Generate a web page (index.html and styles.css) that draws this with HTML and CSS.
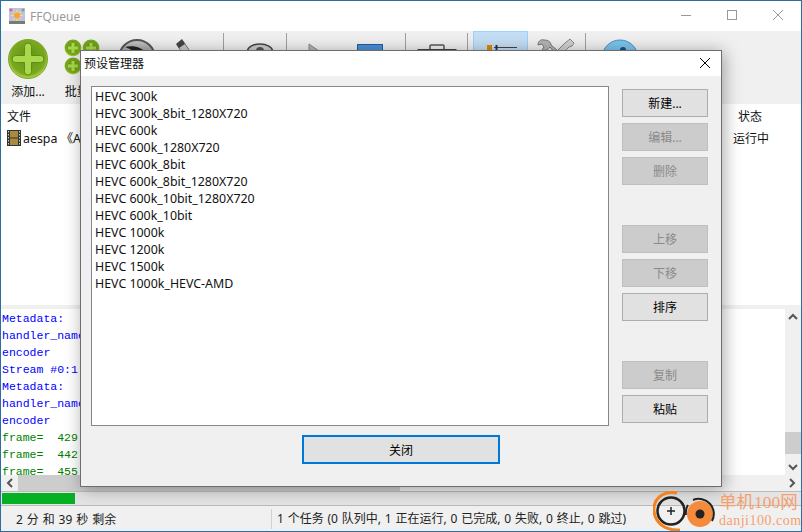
FILE: index.html
```html
<!DOCTYPE html>
<html lang="zh">
<head>
<meta charset="utf-8">
<title>FFQueue</title>
<link rel="stylesheet" href="styles.css">
</head>
<body>
<div class="window">
  <header class="titlebar">
    <svg class="app-icon" width="16" height="16" viewBox="0 0 16 16">
      <rect width="16" height="16" fill="#c3c0dc"/>
      <rect y="13" width="16" height="3" fill="#77806a"/>
      <path d="M8 2v11M2 7.500h12M4 3.500l8 8M12 3.500l-8 8" stroke="#f3e27c" stroke-width="1"/>
      <circle cx="8" cy="7.500" r="3" fill="#f6a82d"/>
      <circle cx="2" cy="2" r="1.500" fill="#e0607a"/>
      <circle cx="14" cy="2" r="1.500" fill="#6fb06a"/>
    </svg>
    <span class="app-name">FFQueue</span>
    <div class="win-controls">
      <svg width="12" height="12" viewBox="0 0 12 12"><path d="M1 6.500h10" stroke="#999" fill="none"/></svg>
      <svg width="12" height="12" viewBox="0 0 12 12"><rect x="1.500" y="1.500" width="9" height="9" stroke="#999" fill="none"/></svg>
      <svg width="12" height="12" viewBox="0 0 12 12"><path d="M1 1l10 10M11 1L1 11" stroke="#999" fill="none"/></svg>
    </div>
  </header>

  <nav class="toolbar">
    <div class="tool tool-add">
      <svg width="40" height="40" viewBox="0 0 40 40">
        <defs>
          <radialGradient id="greenBall" cx=".5" cy=".45" r=".55">
            <stop offset="0" stop-color="#5f8f16"/>
            <stop offset=".8" stop-color="#7aa91f"/>
            <stop offset="1" stop-color="#b3d94a"/>
          </radialGradient>
          <linearGradient id="discFill" x1="0" y1="0" x2="0" y2="1">
            <stop offset="0" stop-color="#c8c8c8"/>
            <stop offset="1" stop-color="#555"/>
          </linearGradient>
        </defs>
        <circle cx="20" cy="20" r="19.500" fill="url(#greenBall)" stroke="#7fa52a"/>
        <path d="M16.500 7.500a3.500 3.500 0 0 1 7 0v9h9a3.500 3.500 0 0 1 0 7h-9v9a3.500 3.500 0 0 1-7 0v-9h-9a3.500 3.500 0 0 1 0-7h9z" fill="#a9d84a" stroke="#5e8c14"/>
      </svg>
      <span class="tool-label">添加...</span>
    </div>
    <div class="tool tool-batch">
      <svg width="36" height="40" viewBox="0 0 36 40">
        <g fill="url(#greenBall)"><circle cx="9" cy="9" r="8.500"/><circle cx="27" cy="9" r="8.500"/><circle cx="9" cy="27" r="8.500"/></g>
        <path d="M7.500 4h3v3.500H14v3h-3.500V14h-3v-3.500H4v-3h3.500zM25.500 4h3v3.500H32v3h-3.500V14h-3v-3.500H22v-3h3.500zM7.500 22h3v3.500H14v3h-3.500V32h-3v-3.500H4v-3h3.500z" fill="#a9d84a"/>
      </svg>
      <span class="tool-label">批量...</span>
    </div>
    <div class="tool tool-disc">
      <svg width="40" height="40" viewBox="0 0 40 40">
        <circle cx="20" cy="20" r="18" fill="url(#discFill)" stroke="#555" stroke-width="2"/>
        <path d="M8 9c8-2 17 0 21 6-3 0-5 2-6 4-4-5-9-8-15-10z" fill="#222"/>
      </svg>
    </div>
    <div class="tool tool-pen">
      <svg width="24" height="40" viewBox="0 0 24 40">
        <path d="M3 7l6-4 15 22-6 4z" fill="#ccc" stroke="#777"/>
        <path d="M2 6l6-5 3 5-6 4z" fill="#444"/>
      </svg>
    </div>
    <i class="sep"></i>
    <div class="tool tool-eye">
      <svg width="28" height="30" viewBox="0 0 28 30">
        <ellipse cx="14" cy="9" rx="12.500" ry="7" fill="#ccc" stroke="#444" stroke-width="1.500"/>
        <circle cx="14" cy="9" r="4" fill="#555"/>
      </svg>
    </div>
    <i class="sep"></i>
    <div class="tool tool-play">
      <svg width="24" height="30" viewBox="0 0 24 30"><path d="M1 1l20 14L1 29z" fill="#b4b4b4" stroke="#8a8a8a"/></svg>
    </div>
    <div class="tool tool-stop">
      <svg width="26" height="26" viewBox="0 0 26 26"><rect x=".5" y=".5" width="25" height="25" fill="#4b8fd6" stroke="#1f5f9f"/></svg>
    </div>
    <i class="sep"></i>
    <div class="tool tool-case">
      <svg width="40" height="30" viewBox="0 0 40 30">
        <path d="M13 6V2a1 1 0 0 1 1-1h12a1 1 0 0 1 1 1v4" fill="none" stroke="#555" stroke-width="1.500"/>
        <rect x="1" y="5.500" width="38" height="22" fill="#999" stroke="#444"/>
      </svg>
    </div>
    <i class="sep"></i>
    <div class="tool tool-prefs">
      <svg width="30" height="10" viewBox="0 0 30 10">
        <rect x="0" y="0" width="5" height="5" fill="#e08a00"/>
        <path d="M7 2.500h23" stroke="#444"/>
        <path d="M9.500 0v5" stroke="#333" stroke-width="2"/>
      </svg>
    </div>
    <div class="tool tool-tools">
      <svg width="38" height="26" viewBox="0 0 38 26">
        <path d="M7 2C3 1 1 4 1 7l4-1 2 3-2 3c3 1 6 0 8-3l12 15 4-4L14 7c0-3-3-5-7-5z" fill="#b4b4b4" stroke="#777"/>
        <path d="M33 1l4 4-2 3-3 1-14 14-4-4L28 5z" fill="#d0d0d0" stroke="#888"/>
      </svg>
    </div>
    <i class="sep"></i>
    <div class="tool tool-info">
      <svg width="38" height="38" viewBox="0 0 38 38">
        <circle cx="19" cy="19" r="18" fill="#7cc4ec" stroke="#4a90c8"/>
        <circle cx="22" cy="11" r="3" fill="#1d4f91"/>
      </svg>
    </div>
  </nav>

  <section class="queue">
    <div class="queue-head"><span class="col-file">文件</span><span class="col-status">状态</span></div>
    <div class="queue-row">
      <svg class="film" width="14" height="16" viewBox="0 0 14 16">
        <rect width="14" height="16" fill="#333"/>
        <rect x="3" y="1" width="8" height="14" fill="#a88c3c"/>
        <path d="M3 8h8" stroke="#333"/>
        <path d="M1.500 1v14M12.500 1v14" stroke="#ccc" stroke-dasharray="1.500 1.500"/>
      </svg>
      <span class="col-file name">aespa 《Armageddon》</span><span class="col-status">运行中</span>
    </div>
  </section>

  <div class="splitter"></div>

  <section class="log">
    <div class="log-body">
      <pre class="log-text"><span class="info">Metadata:
handler_name
encoder
Stream #0:1
Metadata:
handler_name
encoder
</span><span class="ok">frame=  429
frame=  442
frame=  455</span></pre>
    </div>
    <div class="vscroll">
      <svg width="16" height="16" viewBox="0 0 16 16"><path d="M4 10l4-4 4 4" stroke="#555" stroke-width="2" fill="none"/></svg>
      <div class="vtrack"><div class="vthumb"></div></div>
      <svg width="16" height="16" viewBox="0 0 16 16"><path d="M4 6l4 4 4-4" stroke="#555" stroke-width="2" fill="none"/></svg>
    </div>
  </section>
  <div class="hscroll">
    <svg width="17" height="16" viewBox="0 0 17 16"><path d="M11 4L7 8l4 4" stroke="#555" stroke-width="2" fill="none"/></svg>
    <div class="htrack"><div class="hthumb"></div></div>
    <svg width="17" height="16" viewBox="0 0 17 16"><path d="M6 4l4 4-4 4" stroke="#555" stroke-width="2" fill="none"/></svg>
  </div>

  <div class="progress"><div class="progress-fill" style="width:73px"></div></div>

  <footer class="statusbar">
    <span class="status-left">2 分 和 39 秒 剩余</span>
    <span class="status-right">1 个任务 (0 队列中, 1 正在运行, 0 已完成, 0 失败, 0 终止, 0 跳过)</span>
  </footer>

  <div class="dialog">
    <div class="dialog-title">
      <span>预设管理器</span>
      <svg width="12" height="12" viewBox="0 0 12 12"><path d="M1 1l10 10M11 1L1 11" stroke="#000" fill="none"/></svg>
    </div>
    <div class="dialog-main">
      <ul class="preset-list">
        <li>HEVC 300k</li>
        <li>HEVC 300k_8bit_1280X720</li>
        <li>HEVC 600k</li>
        <li>HEVC 600k_1280X720</li>
        <li>HEVC 600k_8bit</li>
        <li>HEVC 600k_8bit_1280X720</li>
        <li>HEVC 600k_10bit_1280X720</li>
        <li>HEVC 600k_10bit</li>
        <li>HEVC 1000k</li>
        <li>HEVC 1200k</li>
        <li>HEVC 1500k</li>
        <li>HEVC 1000k_HEVC-AMD</li>
      </ul>
      <div class="dialog-buttons">
        <button class="btn">新建...</button>
        <button class="btn" disabled>编辑...</button>
        <button class="btn" disabled>删除</button>
        <button class="btn btn-gap" disabled>上移</button>
        <button class="btn" disabled>下移</button>
        <button class="btn">排序</button>
        <button class="btn btn-gap" disabled>复制</button>
        <button class="btn">粘贴</button>
      </div>
    </div>
    <div class="dialog-foot"><button class="btn btn-close">关闭</button></div>
  </div>

  <div class="watermark">
    <svg class="wm-logo" width="64" height="42" viewBox="0 0 64 42">
      <path d="M24 3C9 0 0 10 1 21c1 11 10 20 26 19" fill="none" stroke="#f5821f" stroke-width="3"/>
      <circle cx="18" cy="21" r="13.500" fill="none" stroke="#222" stroke-width="2.500"/>
      <path d="M14 21h8M18 17v8" stroke="#222" stroke-width="1.500"/>
      <circle cx="47" cy="24" r="13" fill="#f58a3c"/>
      <path d="M40 10a15 15 0 0 1 19 21" fill="none" stroke="#222" stroke-width="2"/>
      <path d="M35 15a15 15 0 0 0-2 10" fill="none" stroke="#222" stroke-width="2"/>
      <circle cx="47" cy="24" r="4.500" fill="#222"/>
    </svg>
    <div class="wm-text"><span class="wm-cn">单机100网</span><span class="wm-en">danji100.com</span></div>
  </div>
</div>
</body>
</html>
```
FILE: styles.css
```css
* { box-sizing: border-box; }
html, body { margin: 0; padding: 0; }
body { width: 802px; height: 532px; overflow: hidden; background: #fff; }
.window {
  position: relative;
  width: 802px;
  height: 532px;
  display: flex;
  flex-direction: column;
  border: 1px solid #2b6ea3;
  background: #fff;
  font: 12px "Noto Sans", "Noto Sans CJK SC", sans-serif;
  color: #111;
  overflow: hidden;
}
.titlebar { height: 30px; flex: none; display: flex; align-items: center; padding-left: 8px; background: #fff; }
.app-icon { margin-right: 5px; margin-bottom: 1px; }
.app-name { color: #999; font-size: 12px; }
.win-controls { margin-left: auto; display: flex; gap: 34px; padding: 0 17px 2px 0; }

.toolbar { height: 73px; flex: none; display: flex; background: #f0f0f0; }
.tool { flex: none; display: flex; flex-direction: column; align-items: center; padding-top: 7px; }
.tool-label { margin-top: 4px; line-height: 18px; white-space: nowrap; }
.tool-add { width: 54px; padding-top: 8px; }
.tool-batch { width: 53px; padding-top: 8px; }
.tool-disc { width: 57px; padding-top: 7px; }
.tool-pen { width: 57px; align-items: flex-start; padding-left: 9px; }
.tool-eye { width: 60px; padding-top: 11px; align-items: flex-start; padding-left: 21px; }
.tool-play { width: 54px; padding-top: 12px; align-items: flex-start; padding-left: 20px; }
.tool-stop { width: 62px; padding-top: 13px; align-items: flex-start; padding-left: 15px; }
.tool-case { width: 59px; padding-top: 13px; }
.tool-prefs { width: 55px; margin-left: 4px; padding: 13px 0 0 13px; align-items: flex-start; background: #c4def5; border: 1px solid #99d1ff; border-bottom: 0; }
.tool-tools { width: 56px; padding-top: 7px; }
.tool-info { width: 62px; padding-top: 8px; padding-left: 4px; }
.sep { flex: none; width: 1px; height: 68px; margin: 2px 1px 0; background: #a0a0a0; }

.queue { height: 201px; flex: none; padding-top: 3px; background: #fff; }
.queue-head, .queue-row { position: relative; display: flex; align-items: center; height: 17px; }
.queue-head { height: 18px; margin-bottom: 4px; padding-left: 6px; }
.queue-row { padding-left: 6px; }
.film { margin-right: 2px; }
.name { font-size: 12.400px; }
.queue-head .col-status { margin-left: auto; margin-right: 39px; }
.queue-row .col-status { margin-left: auto; margin-right: 32px; }

.splitter { height: 4px; flex: none; background: #f0f0f0; }
.log { height: 166px; flex: none; display: flex; }
.log-body { flex: 1; overflow: hidden; padding: 1px 0 0 1px; }
.log-text { margin: 0; font: 11.500px/17px "Liberation Mono", "DejaVu Sans Mono", monospace; }
.info { color: #0000ff; }
.ok { color: #008000; }
.vscroll { width: 16px; flex: none; display: flex; flex-direction: column; background: #f0f0f0; }
.vscroll svg { flex: none; }
.vtrack { flex: 1; display: flex; flex-direction: column; justify-content: flex-end; padding-bottom: 5px; }
.vthumb { height: 22px; background: #cdcdcd; }
.hscroll { height: 16px; flex: none; display: flex; align-items: center; background: #f0f0f0; }
.htrack { flex: 1; height: 16px; }
.hthumb { width: 382px; height: 16px; background: #cdcdcd; }
.progress { height: 15px; flex: none; padding: 1px; background: #e4e4e4; border-top: 1px solid #bbb; border-bottom: 1px solid #bbb; }
.progress-fill { height: 100%; background: #06b025; }
.statusbar { flex: 1; display: flex; align-items: center; background: #f0f0f0; padding-left: 15px; }
.status-left { width: 255px; color: #222; word-spacing: .8px; }
.status-right { border-left: 1px solid #d0d0d0; padding-left: 5px; line-height: 20px; color: #222; word-spacing: .7px; white-space: nowrap; }

.dialog {
  position: absolute;
  left: 79px;
  top: 49px;
  width: 642px;
  height: 437px;
  display: flex;
  flex-direction: column;
  background: #f0f0f0;
  border: 1px solid #6d6d6d;
  box-shadow: 2px 2px 16px rgba(0, 0, 0, .35);
}
.dialog-title { height: 25px; flex: none; display: flex; align-items: center; justify-content: space-between; padding: 0 10px 2px 3px; background: #fff; }
.dialog-main { height: 350px; flex: none; display: flex; padding: 10px 13px 0 10px; }
.preset-list { width: 518px; height: 340px; margin: 0; padding: 1px 3px; list-style: none; background: #fff; border: 1px solid #828790; font-size: 12.400px; }
.preset-list li { height: 17px; line-height: 17px; white-space: nowrap; }
.dialog-buttons { margin-left: 13px; padding-top: 3px; display: flex; flex-direction: column; gap: 6px; }
.btn { display: block; width: 86px; height: 28px; padding: 0; background: #e1e1e1; border: 1px solid #adadad; font: inherit; color: #000; }
.btn:disabled { background: #cccccc; border-color: #bfbfbf; color: #8a8a8a; }
.btn-gap { margin-top: 34px; }
.dialog-foot { flex: 1; display: flex; justify-content: center; padding-top: 9px; }
.btn-close { width: 198px; height: 29px; border: 2px solid #0078d7; }

.watermark { position: absolute; left: 652px; top: 489px; display: flex; align-items: flex-start; }
.wm-logo { margin-right: 1px; }
.wm-text { display: flex; flex-direction: column; margin-left: 1px; padding-top: 2px; }
.wm-cn { font: 17.500px/21px "Liberation Serif", "Noto Sans CJK SC", serif; color: #f5a070; white-space: nowrap; }
.wm-en { font: 14px/16px "Liberation Serif", serif; color: #f5a070; letter-spacing: .5px; white-space: nowrap; }
```
